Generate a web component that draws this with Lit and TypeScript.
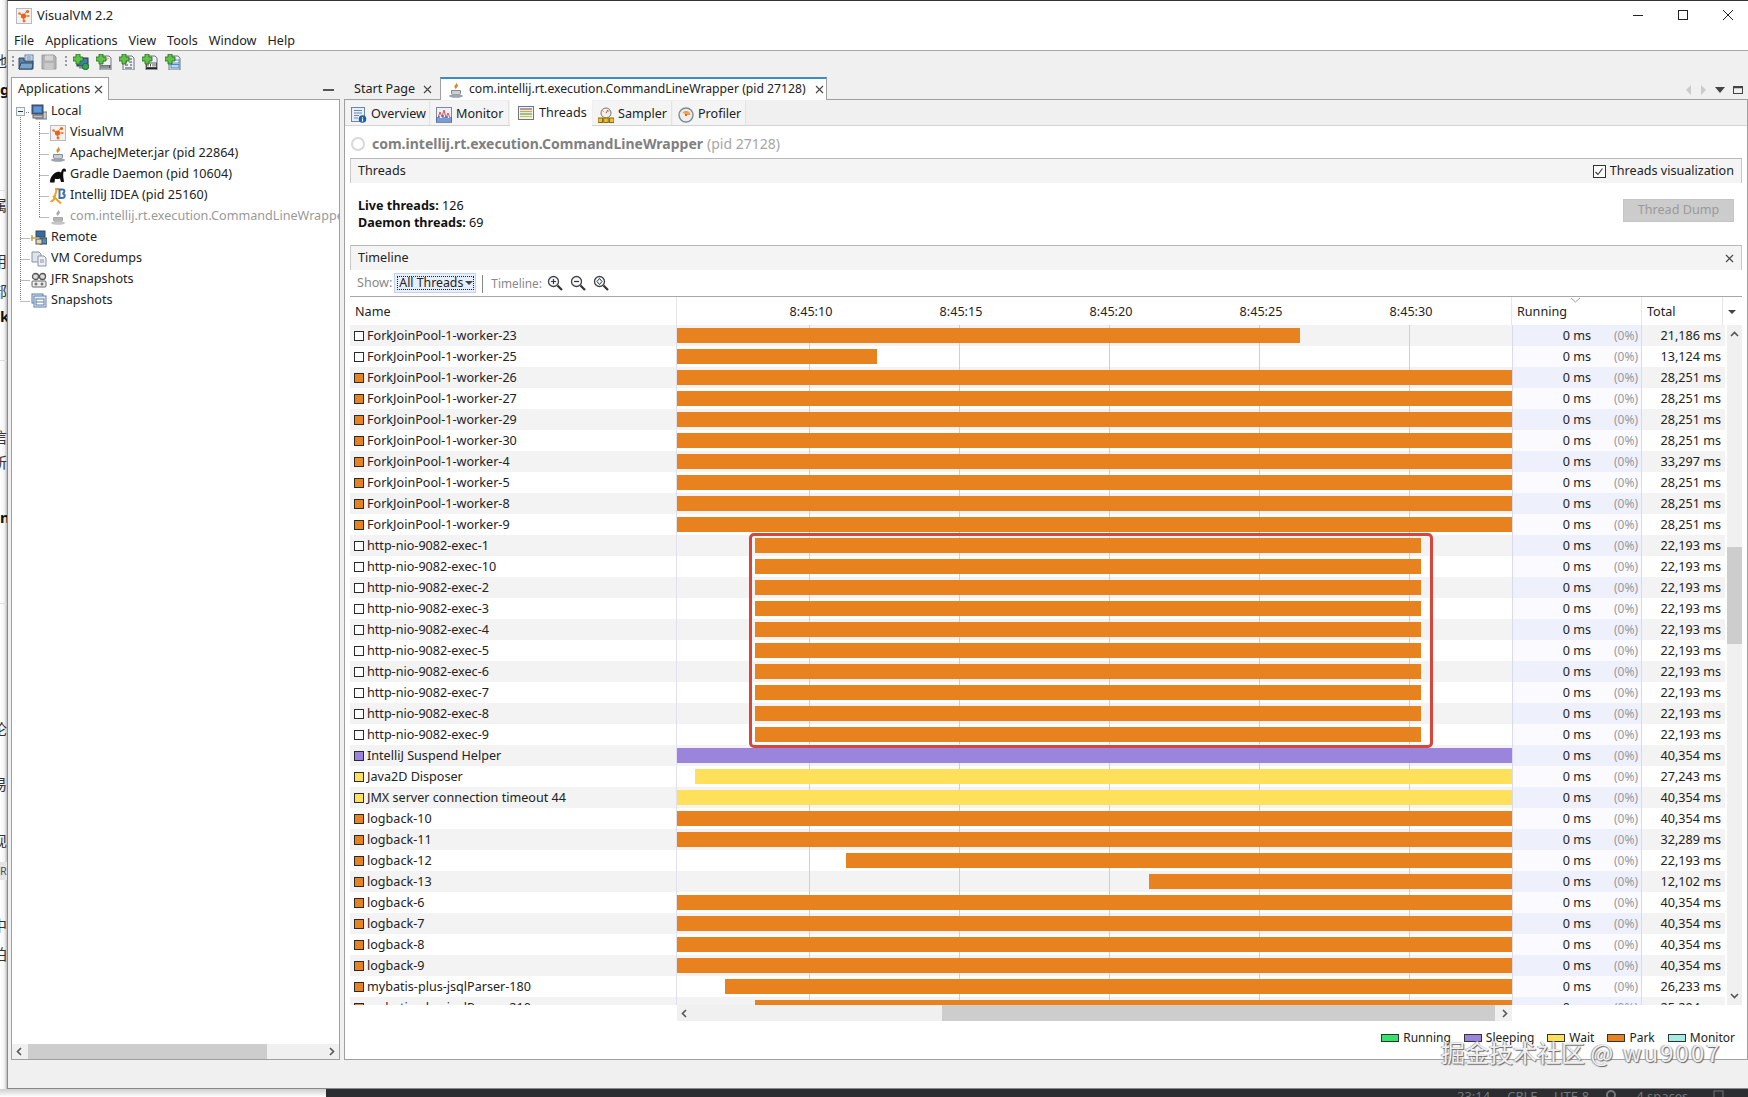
import { LitElement, html, css, svg } from "lit";
import { customElement } from "lit/decorators.js";

const ORANGE = "#e8821e", PURPLE = "#9b84db", YELLOW = "#ffe05a";
type Row = { n: string; c: string; s: number; e: number; t: string };
const FULL_S = 677, FULL_E = 1512;
const rows: Row[] = [
  { n: "ForkJoinPool-1-worker-23", c: "#fff", s: FULL_S, e: 1300, t: "21,186" },
  { n: "ForkJoinPool-1-worker-25", c: "#fff", s: FULL_S, e: 877, t: "13,124" },
  ...["26", "27", "29", "30"].map((k) => ({ n: `ForkJoinPool-1-worker-${k}`, c: ORANGE, s: FULL_S, e: FULL_E, t: "28,251" })),
  { n: "ForkJoinPool-1-worker-4", c: ORANGE, s: FULL_S, e: FULL_E, t: "33,297" },
  ...["5", "8", "9"].map((k) => ({ n: `ForkJoinPool-1-worker-${k}`, c: ORANGE, s: FULL_S, e: FULL_E, t: "28,251" })),
  ...["1", "10", "2", "3", "4", "5", "6", "7", "8", "9"].map((k) => ({ n: `http-nio-9082-exec-${k}`, c: "#fff", s: 755, e: 1421, t: "22,193" })),
  { n: "IntelliJ Suspend Helper", c: PURPLE, s: FULL_S, e: FULL_E, t: "40,354" },
  { n: "Java2D Disposer", c: YELLOW, s: 695, e: FULL_E, t: "27,243" },
  { n: "JMX server connection timeout 44", c: YELLOW, s: FULL_S, e: FULL_E, t: "40,354" },
  { n: "logback-10", c: ORANGE, s: FULL_S, e: FULL_E, t: "40,354" },
  { n: "logback-11", c: ORANGE, s: FULL_S, e: FULL_E, t: "32,289" },
  { n: "logback-12", c: ORANGE, s: 846, e: FULL_E, t: "22,193" },
  { n: "logback-13", c: ORANGE, s: 1149, e: FULL_E, t: "12,102" },
  ...["6", "7", "8", "9"].map((k) => ({ n: `logback-${k}`, c: ORANGE, s: FULL_S, e: FULL_E, t: "40,354" })),
  { n: "mybatis-plus-jsqlParser-180", c: ORANGE, s: 725, e: FULL_E, t: "26,233" },
  { n: "mybatis-plus-jsqlParser-210", c: ORANGE, s: 755, e: FULL_E, t: "25,294" },
];

const frags = [
  { t: "地", y: 52, k: "c" }, { t: "g", y: 80, k: "b" }, { t: "属", y: 196, k: "c" }, { t: "用", y: 252, k: "c" },
  { t: "部", y: 282, k: "c" }, { t: "k", y: 307, k: "b" }, { t: "信", y: 428, k: "c" }, { t: "所", y: 453, k: "c" },
  { t: "n", y: 508, k: "b" }, { t: "论", y: 720, k: "c" }, { t: "易", y: 775, k: "c" }, { t: "现", y: 832, k: "c" },
  { t: "R", y: 862, k: "r" }, { t: "中", y: 916, k: "c" }, { t: "拍", y: 945, k: "c" },
];

const s16 = (body: unknown, w = 16, h = 16) => html`<svg class="ic" width=${w} height=${h} viewBox="0 0 16 16">${body}</svg>`;

const vvmIcon = () => s16(svg`<rect x=".5" y=".5" width="15" height="15" fill="#f4f1ee" stroke="#b9b9c4"/>
  <path d="M11 3 7 8l1 5M4 6l3 2m0 0 5 0" stroke="#e8701e" stroke-width="1" fill="none"/>
  <circle cx="7.5" cy="8" r="2.6" fill="#e8621a"/><circle cx="11.5" cy="3.5" r="1.6" fill="#e8621a"/><circle cx="3.5" cy="5.5" r="1.2" fill="#e8701e"/><circle cx="8" cy="13" r="1.4" fill="#e8701e"/><circle cx="12.5" cy="8" r="1" fill="#e8701e"/>`);
const javaIcon = (grey = false) => s16(svg`<path d="M8.5 0c1 2-2.5 3-2 5 .2 1 1 1.600 1.300 2.500C8 5.500 11 4.500 9.500 2.500 9.200 2 8.900 1 8.500 0Z" fill=${grey ? "#aaa" : "#e8821e"}/>
  <path d="M3.500 8.500h9v2.500c0 1.500-1.500 2-4.500 2s-4.500-.5-4.500-2Z" fill=${grey ? "#b5b5b5" : "#cfcfcf"} stroke=${grey ? "#aaa" : "#7d8a99"}/>
  <ellipse cx="8" cy="14" rx="7" ry="1.700" fill=${grey ? "#c5c5c5" : "#9aa5b1"}/>`);
const gradleIcon = () => s16(svg`<path d="M0 15.500c0-2 .3-4 1.300-5.500C2.500 8 4.500 5.500 7 5c2-.4 3.500 0 4 .8.300-2.300 1.500-4.300 3.200-4.300 1 0 1.800.8 1.800 2 0 1-.7 1.500-1.300 1.300-.8-.3-.6-1.300-.2-1.500-.8.500-1.300 2.400-1.300 5 0 2 .5 4 .8 6.700H11l-1-3.500c-1.500.7-3.500.7-5 .2L4.500 15.500H0Z" fill="#0c0c0c"/>`);
const ideaIcon = () => s16(svg`<path d="M7 .5 4.500 9.500C4 12 2 14 .5 13M5 1h4M3 8l8 7.500" stroke="#f0a020" stroke-width="2" fill="none"/>
  <path d="M9.500 1.500h3c2.500 0 2.500 3.500 0 4 3 .5 3 4.500-.5 4.500H9.500Z" fill="none" stroke="#3f6fb0" stroke-width="2"/>`);
const computerIcon = () => s16(svg`<rect x="5" y="8" width="11" height="7" fill="#c8c8c8" stroke="#777"/><rect x="1" y="1" width="11" height="9" fill="#3568ad" stroke="#444"/><rect x="2.500" y="2.500" width="8" height="6" fill="#5f98dc"/><rect x="2" y="11" width="10" height="3" fill="#bbb" stroke="#666"/>`);
const remoteIcon = () => s16(svg`<rect x="5" y="1" width="9" height="6" fill="#2f6db0" stroke="#444"/><rect x="9" y="8" width="7" height="6" fill="#4d88c8" stroke="#444"/><rect x="5" y="9" width="6" height="5" fill="#e0d8b0" stroke="#555"/><path d="M0 8h5M1 5v6" stroke="#c8a040" stroke-width="1.400"/>`);
const coreIcon = () => s16(svg`<path d="M1 1h7l2 2v8H1Z" fill="#dfe3ea" stroke="#8a93a3"/><path d="M7 5h6l2 2v8H7Z" fill="#eef0f4" stroke="#8a93a3"/><path d="M9 9h4M9 11h4" stroke="#8a93a3"/>`);
const jfrIcon = () => s16(svg`<circle cx="4.500" cy="4.500" r="3" fill="#ddd" stroke="#555" stroke-width="1.300"/><circle cx="11.500" cy="4.500" r="3" fill="#ddd" stroke="#555" stroke-width="1.300"/><rect x="1" y="9" width="14" height="6" rx="1" fill="#eee" stroke="#666"/><circle cx="5" cy="12" r="1.500" fill="#777"/><circle cx="11" cy="12" r="1.500" fill="#777"/>`);
const snapIcon = () => s16(svg`<rect x="1" y="1" width="11" height="9" fill="#dce6f2" stroke="#5b7ea8"/><rect x="3" y="3" width="12" height="11" fill="#e9eff7" stroke="#5b7ea8"/><rect x="5" y="6" width="8" height="6" fill="#fff" stroke="#5b7ea8"/><path d="M5 9h8" stroke="#5b7ea8"/>`);
const openIcon = () => s16(svg`<rect x="7" y="1" width="8" height="7" fill="#e8eef6" stroke="#5b7ea8"/><path d="M8.500 3h5M8.500 5h5" stroke="#5b7ea8"/><path d="M1 4h5v3h9v8H1Z" fill="#5a82aa" stroke="#2e4a66"/><path d="M1 15l2-6h12l-1 6Z" fill="#7aa3c8" stroke="#2e4a66"/>`);
const saveIcon = () => s16(svg`<path d="M1 1h12l2 2v12H1Z" fill="#b3b3b3" stroke="#9c9c9c"/><rect x="4" y="1.500" width="8" height="5" fill="#d6d6d6"/><rect x="3.500" y="9" width="9" height="6" fill="#c9c9c9"/>`);
const plus = svg`<path d="M3 0h4v3h3v4H7v3H3V7H0V3h3Z" fill="#62c146" stroke="#1f6b1f" stroke-width=".8"/>`;
const addIcon = (k: number) => s16(svg`
  ${k === 0
    ? svg`<rect x="4" y="4" width="11" height="8" fill="#3e7fb5" stroke="#333"/><rect x="6" y="12" width="7" height="2.500" fill="#888"/><circle cx="12.500" cy="12.500" r="3.200" fill="#3aa655" stroke="#1f6b3a"/>`
    : svg`<path d="M4 2h9l2 2v12H4Z" fill="#eef1f5" stroke="#6c7686"/>
      ${k === 1 ? svg`<path d="M5 9l8-5" stroke="#d8a040"/><rect x="4.500" y="11" width="10" height="3.500" fill="#555"/><path d="M6 11.500v2.500M8 11.500v2.500M10 11.500v2.500M12 11.500v2.500" stroke="#eee" stroke-width=".8"/>` : ""}
      ${k === 2 ? svg`<path d="M9 5h4M6 8h2M10 8h3M6 11h3M11 11h2M6 14h7" stroke="#445" stroke-width="1.100"/>` : ""}
      ${k === 3 ? svg`<rect x="4.500" y="9" width="10" height="4.500" fill="#fff" stroke="#555"/><path d="M6 10v2.500M8.500 10v2.500M11 10v2.500M13 10v2.500" stroke="#555"/><path d="M4 14.500h11" stroke="#222" stroke-width="1.400"/>` : ""}
      ${k === 4 ? svg`<rect x="6" y="6" width="8" height="3" fill="#fff" stroke="#4d88c8"/><rect x="6" y="10.500" width="8" height="3.500" fill="#bcd8f2" stroke="#4d88c8"/>` : ""}`}
  ${plus}`);

const overviewIcon = () => s16(svg`<rect x=".5" y=".5" width="13" height="14" fill="#e8eef6" stroke="#6a88ad"/><path d="M3 3.500h8M3 6h8M3 8.500h5M3 11h4" stroke="#6a88ad"/><circle cx="11.500" cy="12" r="3.800" fill="#1f5fa8"/><path d="M11.500 10v.8M11.500 11.500v3" stroke="#fff" stroke-width="1.200"/>`);
const monitorIcon = () => s16(svg`<rect x=".5" y=".5" width="15" height="15" fill="#eef0f6" stroke="#7d8a9c"/><path d="M2 11 4 5l2 5 2-7 2 8 2-5 2 5" stroke="#e05050" fill="none"/><path d="M1 15V10M3 15V9M5 15V11M7 15V8M9 15V10M11 15V9M13 15V11M15 15V10" stroke="#3a6fc8" stroke-width="1.300"/>`);
const threadsIcon = () => s16(svg`<rect x=".5" y="1.500" width="15" height="13" fill="#f4f4f4" stroke="#6c7686"/><path d="M2 4h12" stroke="#6c7686" stroke-width="1.300"/><path d="M2 6.500h12" stroke="#e8a030" stroke-width="1.300"/><path d="M2 9h12" stroke="#5faa55" stroke-width="1.300"/><path d="M2 11.500h12" stroke="#d9c050" stroke-width="1.300"/>`);
const samplerIcon = () => s16(svg`<circle cx="8" cy="6" r="5" fill="#f2efe8" stroke="#777"/><path d="M8 6l2-3" stroke="#c04020"/><path d="M4.500 3.500l1 1M11.500 3.500l-1 1" stroke="#777"/><rect x="0" y="11" width="4.500" height="4.500" fill="#f0c030" stroke="#8a6a10"/><rect x="5.750" y="11" width="4.500" height="4.500" fill="#f0c030" stroke="#8a6a10"/><rect x="11.500" y="11" width="4.500" height="4.500" fill="#f0c030" stroke="#8a6a10"/>`);
const profilerIcon = () => s16(svg`<circle cx="8" cy="8" r="7" fill="#f0eee8" stroke="#7d8a9c" stroke-width="1.400"/><path d="M8 8 4.500 5.500A4.500 4.500 0 0 1 12.500 8Z" fill="#eda25a"/><circle cx="8" cy="8" r="1.100" fill="#b85a10"/>`);
const zoomIcon = (k: string) => s16(svg`<circle cx="6.500" cy="6.500" r="5" fill="#f4f7fb" stroke="#444" stroke-width="1.300"/><path d="M10.500 10.500 15 15" stroke="#333" stroke-width="2.200"/>
  ${k === "in" ? svg`<path d="M4 6.500h5M6.500 4v5" stroke="#333" stroke-width="1.200"/>` : ""}
  ${k === "out" ? svg`<path d="M4 6.500h5" stroke="#333" stroke-width="1.200"/>` : ""}
  ${k === "fit" ? svg`<path d="M6.500 3.500 9 6.500 6.500 9.500 4 6.500Z" fill="none" stroke="#333"/>` : ""}`);
const closeX = () => html`<svg class="ic" width="9" height="9" viewBox="0 0 9 9"><path d="M1 1l7 7M8 1 1 8" stroke="#444" stroke-width="1.100"/></svg>`;
const chev = (d: string, c = "#555") => html`<svg class="ic" width="9" height="9" viewBox="0 0 9 9"><path d=${d} fill="none" stroke=${c} stroke-width="1.600"/></svg>`;
const L = "M6 1 2.500 4.500 6 8", R = "M3 1 6.500 4.500 3 8", U = "M1 6 4.500 2.500 8 6", D = "M1 3 4.500 6.500 8 3";

const treeItems = [
  { l: 0, t: "Local", i: computerIcon },
  { l: 1, t: "VisualVM", i: vvmIcon },
  { l: 1, t: "ApacheJMeter.jar (pid 22864)", i: javaIcon },
  { l: 1, t: "Gradle Daemon (pid 10604)", i: gradleIcon },
  { l: 1, t: "IntelliJ IDEA (pid 25160)", i: ideaIcon },
  { l: 1, t: "com.intellij.rt.execution.CommandLineWrapper (pid 27128)", i: () => javaIcon(true), dim: true },
  { l: 0, t: "Remote", i: remoteIcon },
  { l: 0, t: "VM Coredumps", i: coreIcon },
  { l: 0, t: "JFR Snapshots", i: jfrIcon },
  { l: 0, t: "Snapshots", i: snapIcon },
];

@customElement("app-root")
export class AppRoot extends LitElement {
  static styles = css`
    :host { display: block; width: 1748px; height: 1097px; position: relative; overflow: hidden; background: #fff;
      font-family: "Noto Sans", "Noto Sans CJK SC", sans-serif; font-size: 12.600px; color: #222; line-height: 1; }
    .ic { display: block; flex: none; }
    .page { display: flex; flex-direction: column; height: 1097px; }
    .top { display: flex; height: 1089px; }
    .behind { width: 7px; flex: none; position: relative; overflow: hidden; background: linear-gradient(90deg, #fff 0, #f4f4f4 60%, #bdbdbd 100%); }
    .behind span { position: absolute; left: -8px; width: 16px; font-size: 15px; line-height: 18px; color: #333; }
    .behind span.b { left: 0; font-weight: 700; color: #111; }
    .behind span.r { left: 0; width: 7px; font-size: 11px; background: #e4e4e4; color: #555; }
    .behind i { position: absolute; left: 0; width: 7px; height: 1px; background: #ddd; }
    .window { flex: 1; min-width: 0; display: flex; flex-direction: column; border-left: 1px solid #8a8a8a; border-top: 1px solid #333; border-bottom: 1px solid #8a8a8a; background: #f0f0f0; }
    .title { height: 29px; flex: none; background: #fff; display: flex; align-items: center; padding: 0 15px 0 8px; gap: 5px; font-size: 12.800px; }
    .title .grow { flex: 1; }
    .winctl { display: flex; gap: 35px; align-items: center; margin-top: -2px; }
    .menu { height: 18px; flex: none; background: #fff; border-bottom: 1px solid #a6a6a6; display: flex; align-items: center; gap: 11px; padding: 2px 0 0 6px; box-sizing: content-box; }
    .tools { height: 21px; flex: none; display: flex; align-items: center; padding-left: 4px; gap: 7px; box-sizing: content-box; }
    .grip { width: 2px; height: 13px; flex: none; background-image: radial-gradient(circle, #999 1px, transparent 1px); background-size: 2px 4px; margin-right: -3px; }
    .grip.second { margin-left: 1px; margin-right: -1px; }
    .work { height: 988px; flex: none; display: flex; padding-left: 3px; gap: 4px; }
    .apps { width: 329px; flex: none; display: flex; flex-direction: column; }
    .main { flex: 1; min-width: 0; display: flex; flex-direction: column; }
    .strip { height: 28px; flex: none; display: flex; align-items: flex-end; position: relative; z-index: 1; margin-bottom: -1px; box-sizing: content-box; }
    .tab { height: 22px; display: flex; align-items: center; gap: 7px; box-sizing: border-box; white-space: nowrap; }
    .tab.app { width: 98px; background: #fff; border: 1px solid #a0a0a0; border-bottom: 0; padding: 1px 0 0 6px; gap: 4px; height: 23px; }
    .strip .min { margin-left: auto; margin-right: 6px; width: 11px; height: 2px; background: #555; margin-bottom: 9px; }
    .tab.start { width: 96px; padding-left: 10px; gap: 8px; }
    .tab.cur { width: 387px; height: 23px; background: #fff; border: 1px solid #a0a0a0; border-top: 2px solid #3a8cc4; border-bottom: 0; padding-left: 7px; gap: 4px; }
    .tab.cur .lbl { margin-left: 1px; margin-right: 5px; font-size: 12.200px; }
    .stripctl { margin-left: auto; display: flex; align-items: center; gap: 8px; padding-right: 5px; margin-bottom: 5px; }
    .panel { flex: 1; min-height: 0; border: 1px solid #a0a0a0; background: #fff; position: relative; box-sizing: border-box; }
    .apps .panel { display: flex; flex-direction: column; overflow: hidden; }
    .tree { flex: 1; position: relative; overflow: hidden; padding-top: 1px; }
    .guides { position: absolute; left: 0; top: 1px; pointer-events: none; }
    .tree-row { height: 21px; display: flex; align-items: center; gap: 4px; white-space: nowrap; position: relative; }
    .tree-row.l0 { padding-left: 19px; }
    .tree-row.l1 { padding-left: 38px; }
    .tree-row.dim { color: #999; }
    .expander { position: absolute; left: 4px; top: 6px; width: 9px; height: 9px; box-sizing: border-box; border: 1px solid #9aa; background: #f4f4f4; display: flex; align-items: center; justify-content: center; }
    .expander::after { content: ""; width: 5px; height: 1px; background: #334; }
    .hs { height: 15px; flex: none; background: #f0f0f0; display: flex; align-items: center; justify-content: space-between; padding: 0 3px; position: relative; }
    .hs .thumb { position: absolute; top: 0; bottom: 0; background: #cdcdcd; }
    .apps .hs .thumb { left: 16px; width: 239px; }
    .main .panel { display: flex; flex-direction: column; }
    .subtabs { height: 26px; flex: none; display: flex; align-items: flex-end; gap: 1px; padding-left: 1px; border-bottom: 1px solid #d4d4d4; background: #f0f0f0; position: relative; box-sizing: border-box; }
    .st { height: 24px; display: flex; align-items: center; gap: 4px; padding: 3px 0 0 5px; box-sizing: border-box; background: #f4f4f4; border-right: 1px solid #e4e4e4; }
    .st.on { height: 26px; background: #fff; margin-bottom: -1px; padding: 0 0 0 8px; gap: 5px; position: relative; border-right: 0; }
    .content { flex: 1; min-height: 0; padding: 0 5px; display: flex; flex-direction: column; }
    .head { height: 32px; flex: none; display: flex; align-items: center; gap: 7px; font-size: 14px; color: #808080; padding-left: 1px; padding-top: 3px; box-sizing: border-box; }
    .head b { font-weight: 700; }
    .head span { color: #a6a6a6; font-weight: 400; margin-left: -3px; }
    .dot { width: 14px; height: 14px; border: 2px solid #d8d8d8; border-radius: 50%; box-sizing: border-box; background: #fff; flex: none; }
    .sec { height: 25px; flex: none; background: #f4f4f4; border-top: 1px solid #b8b8b8; border-left: 1px solid #c8c8c8; border-right: 1px solid #c8c8c8; display: flex; align-items: center; justify-content: space-between; padding: 1px 7px 0 7px; box-sizing: border-box; }
    .chk { display: flex; align-items: center; gap: 4px; }
    .box { width: 13px; height: 13px; border: 1px solid #333; background: #fff; box-sizing: border-box; display: flex; align-items: center; justify-content: center; }
    .stats { height: 62px; flex: none; display: flex; justify-content: space-between; align-items: center; padding: 0 8px 0 8px; box-sizing: border-box; }
    .stats .t { line-height: 17px; color: #111; }
    .stats b { font-weight: 700; }
    .btn { width: 111px; height: 23px; background: #cccccc; border: 1px solid #c4c4c4; box-sizing: border-box; color: #9a9a9a; display: flex; align-items: center; justify-content: center; margin-bottom: 7px; }
    .filter { height: 26px; flex: none; display: flex; align-items: center; padding: 1px 0 0 7px; color: #888; box-sizing: border-box; }
    .filter .tlbl { font-size: 11.800px; }
    .combo { width: 82px; height: 20px; margin-left: 2px; background: #e6eefa; border: 1px solid #c4d4ea; box-sizing: border-box; padding: 2px; display: flex; margin-top: -1px; }
    .combo div { flex: 1; border: 1px dotted #222; color: #222; display: flex; align-items: center; padding-left: 1px; gap: 2px; white-space: nowrap; font-size: 12.300px; }
    .arrow { width: 0; height: 0; border-left: 4px solid transparent; border-right: 4px solid transparent; border-top: 4px solid #444; }
    .sep { width: 1px; height: 18px; background: #888; margin: 0 8px 0 6px; }
    .filter .zooms { display: flex; gap: 7px; margin-left: 5px; margin-top: -2px; }
    .thead { height: 29px; flex: none; border-top: 1px solid #a8a8a8; display: grid; grid-template-columns: 327px 835px 130px 81px 1fr; box-sizing: border-box; align-items: stretch; }
    .thead > div { display: flex; align-items: center; border-right: 1px solid #e6e6e6; padding: 2px 0 0 5px; position: relative; }
    .thead .times { padding-left: 59px; }
    .thead .times span { width: 150px; text-align: center; flex: none; }
    .thead .corner { border-right: 0; padding-left: 5px; }
    .sortm { position: absolute; left: 59px; top: 1px; }
    .tbody { height: 680px; flex: none; display: flex; overflow: hidden; }
    .rows { width: 1375px; flex: none; position: relative; }
    .row { height: 21px; display: grid; grid-template-columns: 327px 835px 130px 83px; }
    .row.alt { background: #f3f3f3; }
    .nm { display: flex; align-items: center; padding: 1px 0 0 4px; gap: 3px; white-space: nowrap; }
    .sw { width: 10px; height: 10px; box-sizing: border-box; border: 1px solid #2a2a2a; flex: none; }
    .tl { display: flex; align-items: center; border-left: 1px solid #e0e0ee; margin-left: -1px; background-image: linear-gradient(90deg, transparent 149px, #cfcfcf 149px); background-size: 150px 100%; background-position: -17px 0; }
    .bar { height: 15px; flex: none; margin-top: -1px; }
    .rn { display: flex; align-items: center; justify-content: flex-end; background: #fbfbff; border-left: 1px solid #d8daf2; border-right: 1px solid #d8daf2; box-sizing: border-box; padding: 1px 3px 0 0; }
    .row.alt .rn { background: #eef0fb; }
    .rn .ms { color: #222; }
    .rn .pc { color: #999; width: 47px; text-align: right; font-size: 12px; }
    .tt { display: flex; align-items: center; justify-content: flex-end; padding: 1px 4px 0 0; }
    .vs { width: 15px; margin-left: 2px; flex: none; background: #f0f0f0; display: flex; flex-direction: column; justify-content: space-between; align-items: center; padding: 5px 0; box-sizing: border-box; position: relative; }
    .vs .thumb { position: absolute; top: 222px; left: 0; right: 0; height: 97px; background: #cdcdcd; }
    .redbox { position: absolute; left: 399px; top: 208px; width: 684px; height: 215px; box-sizing: border-box; border: 3px solid #d8453a; border-radius: 5px; box-shadow: inset 0 0 0 1px #fff8; pointer-events: none; }
    .hs.tbl { margin-left: 327px; width: 835px; height: 16px; box-sizing: border-box; flex: none; }
    .hs.tbl .thumb { left: 265px; width: 553px; }
    .legend { flex: 1; display: flex; justify-content: flex-end; align-items: flex-start; padding: 11px 7px 0 0; gap: 13px; font-size: 12px; }
    .lg { display: flex; align-items: center; gap: 4px; }
    .lg i { width: 18px; height: 8px; border: 1px solid #333; box-sizing: border-box; display: block; }
    .bottomgap { flex: 1; }
    .foot { height: 8px; flex: none; display: flex; }
    .foot .w { width: 326px; background: linear-gradient(#cfcfcf, #fff); }
    .foot .d { flex: 1; background: #2b2d30; color: #73777c; overflow: hidden; display: flex; font-size: 13px; line-height: 14px; padding-left: 1131px; gap: 17px; white-space: nowrap; align-items: flex-start; }
    .foot .d svg { margin-top: 1px; }
    .wm { position: absolute; left: 1441px; top: 1036px; font-family: "Noto Sans CJK SC", "Noto Sans", sans-serif; font-size: 24px; line-height: 32px; color: #f0f0f0; white-space: nowrap; text-shadow: 1px 1px 1px #666, -1px 0 1px #999; }
    .wm span { letter-spacing: 2px; }
  `;

  render() {
    return html`
      <div class="page">
        <div class="top">
          <div class="behind">
            <i style="top:360px"></i><i style="top:603px"></i><i style="top:190px"></i>
            ${frags.map((f) => html`<span class=${f.k} style="top:${f.y}px">${f.t}</span>`)}
          </div>
          <div class="window">
            <div class="title">
              ${vvmIcon()}<span>VisualVM 2.2</span><div class="grow"></div>
              <div class="winctl">
                <svg class="ic" width="10" height="10" viewBox="0 0 10 10"><path d="M0 5.500h10" stroke="#222"/></svg>
                <svg class="ic" width="10" height="10" viewBox="0 0 10 10"><rect x=".5" y=".5" width="9" height="9" fill="none" stroke="#222"/></svg>
                <svg class="ic" width="10" height="10" viewBox="0 0 10 10"><path d="M0 0l10 10M10 0 0 10" stroke="#222"/></svg>
              </div>
            </div>
            <div class="menu">${["File", "Applications", "View", "Tools", "Window", "Help"].map((m) => html`<span>${m}</span>`)}</div>
            <div class="tools">
              <div class="grip"></div>${openIcon()}${saveIcon()}<div class="grip second"></div>
              ${[0, 1, 2, 3, 4].map((k) => addIcon(k))}
            </div>
            <div class="work">
              <div class="apps">
                <div class="strip">
                  <div class="tab app"><span>Applications</span>${closeX()}</div>
                  <div class="min"></div>
                </div>
                <div class="panel">
                  <div class="tree">
                    <svg class="guides" width="60" height="210">
                      <path d="M8.500 16V200M8.500 137.500H18M8.500 158.500H18M8.500 179.500H18M8.500 200.500H18M14 11.500H18M27.500 21V116.500M27.500 32.500H37M27.500 53.500H37M27.500 74.500H37M27.500 95.500H37M27.500 116.500H37" stroke="#777" stroke-dasharray="1 1" fill="none"/>
                    </svg>
                    ${treeItems.map((t, i) => html`<div class="tree-row l${t.l} ${t.dim ? "dim" : ""}">
                      ${i === 0 ? html`<div class="expander"></div>` : ""}${t.i()}<span>${t.t}</span></div>`)}
                  </div>
                  <div class="hs"><div class="thumb"></div>${chev(L)}${chev(R)}</div>
                </div>
              </div>
              <div class="main">
                <div class="strip">
                  <div class="tab start"><span>Start Page</span>${closeX()}</div>
                  <div class="tab cur">${javaIcon()}<span class="lbl">com.intellij.rt.execution.CommandLineWrapper (pid 27128)</span>${closeX()}</div>
                  <div class="stripctl">
                    <svg class="ic" width="7" height="10" viewBox="0 0 7 10"><path d="M6 0v10L1 5Z" fill="#ccc"/></svg>
                    <svg class="ic" width="7" height="10" viewBox="0 0 7 10"><path d="M1 0v10l5-5Z" fill="#ccc"/></svg>
                    <svg class="ic" width="10" height="6" viewBox="0 0 10 6"><path d="M0 0h10L5 6Z" fill="#444"/></svg>
                    <svg class="ic" width="10" height="8" viewBox="0 0 10 8"><rect x=".5" y=".5" width="9" height="7" fill="none" stroke="#444"/><path d="M0 1.500h10" stroke="#444" stroke-width="1.500"/></svg>
                  </div>
                </div>
                <div class="panel">
                  <div class="subtabs">
                    <div class="st" style="width:84px">${overviewIcon()}<span>Overview</span></div>
                    <div class="st" style="width:78px">${monitorIcon()}<span>Monitor</span></div>
                    <div class="st on" style="width:82px">${threadsIcon()}<span>Threads</span></div>
                    <div class="st" style="width:79px">${samplerIcon()}<span>Sampler</span></div>
                    <div class="st" style="width:73px">${profilerIcon()}<span>Profiler</span></div>
                  </div>
                  <div class="content">
                    <div class="head"><div class="dot"></div><b>com.intellij.rt.execution.CommandLineWrapper</b><span>(pid 27128)</span></div>
                    <div class="sec"><span>Threads</span>
                      <div class="chk"><div class="box"><svg class="ic" width="10" height="10" viewBox="0 0 10 10"><path d="M1.500 5 4 7.500 8.500 1.500" fill="none" stroke="#333" stroke-width="1.100"/></svg></div><span>Threads visualization</span></div>
                    </div>
                    <div class="stats">
                      <div class="t"><div><b>Live threads:</b> 126</div><div><b>Daemon threads:</b> 69</div></div>
                      <div class="btn">Thread Dump</div>
                    </div>
                    <div class="sec"><span>Timeline</span>${closeX()}</div>
                    <div class="filter">
                      <span>Show:</span>
                      <div class="combo"><div>All Threads<span class="arrow"></span></div></div>
                      <div class="sep"></div>
                      <span class="tlbl">Timeline:</span>
                      <div class="zooms">${zoomIcon("in")}${zoomIcon("out")}${zoomIcon("fit")}</div>
                    </div>
                    <div class="thead">
                      <div>Name</div>
                      <div class="times">${["8:45:10", "8:45:15", "8:45:20", "8:45:25", "8:45:30"].map((t) => html`<span>${t}</span>`)}</div>
                      <div>Running<svg class="ic sortm" width="9" height="5" viewBox="0 0 9 5"><path d="M0 0l4.500 4L9 0" fill="none" stroke="#999"/></svg></div>
                      <div>Total</div>
                      <div class="corner"><span class="arrow"></span></div>
                    </div>
                    <div class="tbody">
                      <div class="rows">
                        ${rows.map((r, i) => html`<div class="row ${i % 2 === 0 ? "alt" : ""}">
                          <div class="nm"><span class="sw" style="background:${r.c}"></span><span>${r.n}</span></div>
                          <div class="tl"><div class="bar" style="margin-left:${r.s - FULL_S}px;width:${r.e - r.s}px;background:${r.c === "#fff" ? ORANGE : r.c}"></div></div>
                          <div class="rn"><span class="ms">0 ms</span><span class="pc">(0%)</span></div>
                          <div class="tt">${r.t} ms</div>
                        </div>`)}
                        <div class="redbox"></div>
                      </div>
                      <div class="vs"><div class="thumb"></div>${chev(U)}${chev(D)}</div>
                    </div>
                    <div class="hs tbl"><div class="thumb"></div>${chev(L)}${chev(R)}</div>
                    <div class="legend">
                      ${[["#34e36b", "Running"], [PURPLE, "Sleeping"], [YELLOW, "Wait"], [ORANGE, "Park"], ["#a5ebe3", "Monitor"]].map(
                        ([c, t]) => html`<div class="lg"><i style="background:${c}"></i><span>${t}</span></div>`)}
                    </div>
                  </div>
                </div>
              </div>
            </div>
            <div class="bottomgap"></div>
          </div>
        </div>
        <div class="foot"><div class="w"></div><div class="d"><span>23:14</span><span>CRLF</span><span>UTF-8</span>
          <svg class="ic" width="10" height="10" viewBox="0 0 10 10"><circle cx="5" cy="5" r="4" fill="none" stroke="#73777c" stroke-width="2"/></svg>
          <span style="margin-left:3px">4 spaces</span>
          <svg class="ic" style="margin-left:8px" width="12" height="10" viewBox="0 0 12 10"><rect x="1" y="1" width="9" height="9" fill="none" stroke="#73777c"/></svg></div></div>
      </div>
      <div class="wm">掘金技术社区 <span>@ wu9007</span></div>
    `;
  }
}
